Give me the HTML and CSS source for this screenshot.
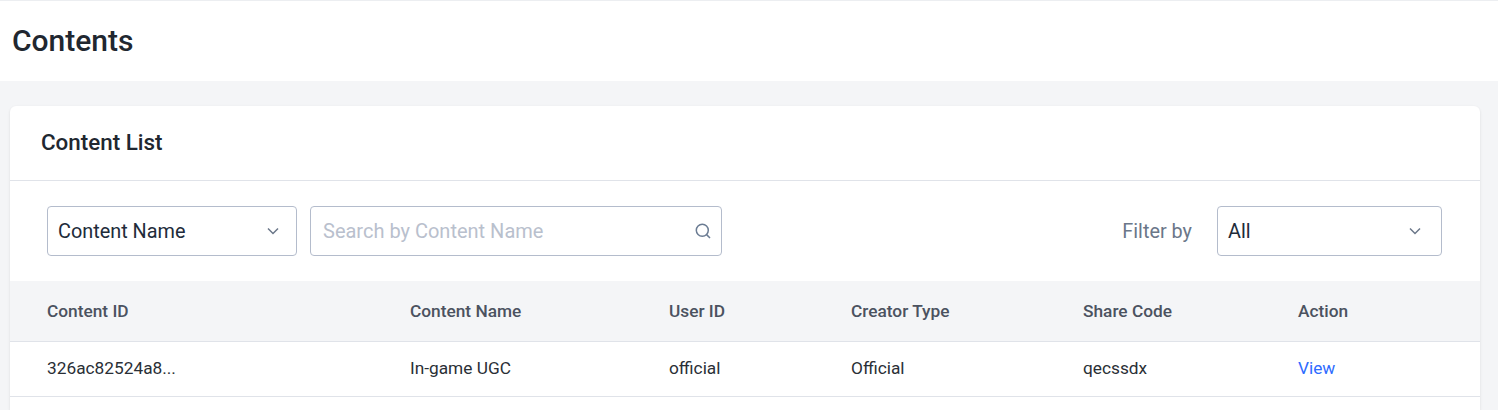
FILE: index.html
```html
<!DOCTYPE html>
<html lang="en">
<head>
    <meta charset="UTF-8">
    <meta name="viewport" content="width=device-width, initial-scale=1.0">
    <title>Contents</title>
    <link rel="stylesheet" href="styles.css">
</head>
<body>
    <header class="page-header">
        <h1>Contents</h1>
    </header>

    <main class="page-body">
        <section class="card">
            <div class="card-header">
                <h2>Content List</h2>
            </div>

            <div class="toolbar">
                <div class="select select-type">
                    <span>Content Name</span>
                    <svg class="chevron" viewBox="0 0 12 8" width="12" height="8"><path d="M1 1.5 6 6.5 11 1.5"/></svg>
                </div>
                <div class="search">
                    <span class="placeholder">Search by Content Name</span>
                    <svg class="search-icon" viewBox="0 0 16 16" width="16" height="16"><circle cx="7.3" cy="7.3" r="6"/><path d="M11.6 11.6 15 15"/></svg>
                </div>
                <span class="filter-label">Filter by</span>
                <div class="select select-filter">
                    <span>All</span>
                    <svg class="chevron" viewBox="0 0 12 8" width="12" height="8"><path d="M1 1.5 6 6.5 11 1.5"/></svg>
                </div>
            </div>

            <div class="table">
                <div class="row row-head">
                    <div>Content ID</div>
                    <div>Content Name</div>
                    <div>User ID</div>
                    <div>Creator Type</div>
                    <div>Share Code</div>
                    <div>Action</div>
                </div>
                <div class="row row-body">
                    <div>326ac82524a8...</div>
                    <div>In-game UGC</div>
                    <div>official</div>
                    <div>Official</div>
                    <div>qecssdx</div>
                    <div><a href="#" class="link">View</a></div>
                </div>
            </div>
        </section>
    </main>
</body>
</html>
```

FILE: styles.css
```css
body {
    font-family: Roboto, "Liberation Sans", sans-serif;
    margin: 0;
    height: 100vh;
    display: flex;
    flex-direction: column;
    background-color: #f4f5f7;
    color: #1f2933;
    overflow: hidden;
}
.page-header {
    height: 81px;
    box-sizing: border-box;
    background-color: white;
    border-top: 1px solid #eceef1;
    padding: 0 12px 2px;
    display: flex;
    align-items: center;
}
h1 {
    margin: 0;
    font-size: 30px;
    font-weight: 500;
    color: #212730;
}
.page-body {
    flex: 1;
    display: flex;
    flex-direction: column;
    padding: 25px 18px 0 10px;
}
.card {
    flex: 1;
    background-color: white;
    border-radius: 6px 6px 0 0;
    box-shadow: 0 1px 3px rgba(0,0,0,0.1);
}
.card-header {
    height: 75px;
    box-sizing: border-box;
    padding: 0 31px 2px;
    border-bottom: 1px solid #e0e3e9;
    display: flex;
    align-items: center;
}
h2 {
    margin: 0;
    font-size: 22.4px;
    font-weight: 500;
    color: #212730;
}
.toolbar {
    height: 100px;
    box-sizing: border-box;
    padding: 0 38px 0 37px;
    display: flex;
    align-items: center;
}
.select, .search {
    height: 50px;
    box-sizing: border-box;
    border: 1px solid #b4bccc;
    border-radius: 4px;
    display: flex;
    align-items: center;
    justify-content: space-between;
    font-size: 19.85px;
}
.select {
    padding: 0 17px 0 10px;
    color: #212b3a;
}
.select-type {
    width: 250px;
}
.select-filter {
    width: 225px;
    padding-right: 20px;
}
.search {
    width: 412px;
    margin-left: 13px;
    padding: 0 10px 0 12px;
    font-size: 20px;
}
.placeholder {
    color: #b9c0cd;
}
.filter-label {
    margin-left: auto;
    margin-right: 25px;
    font-size: 19.85px;
    color: #6b7789;
}
.chevron path {
    fill: none;
    stroke: #6b7789;
    stroke-width: 1.5;
}
.search-icon circle, .search-icon path {
    fill: none;
    stroke: #6b7c93;
    stroke-width: 1.5;
}
.row {
    display: grid;
    grid-template-columns: 363px 259px 182px 232px 215px 1fr;
    padding-left: 37px;
    align-items: center;
    height: 55px;
    box-sizing: border-box;
    border-bottom: 1px solid #e0e3e9;
    font-size: 17.3px;
    color: #2a2f36;
}
.row-head {
    height: 61px;
    background-color: #f4f5f7;
    font-weight: 500;
    color: #4b5260;
}
.row-body {
    padding-bottom: 2px;
}
.link {
    color: #2e6bff;
    text-decoration: none;
}
```
